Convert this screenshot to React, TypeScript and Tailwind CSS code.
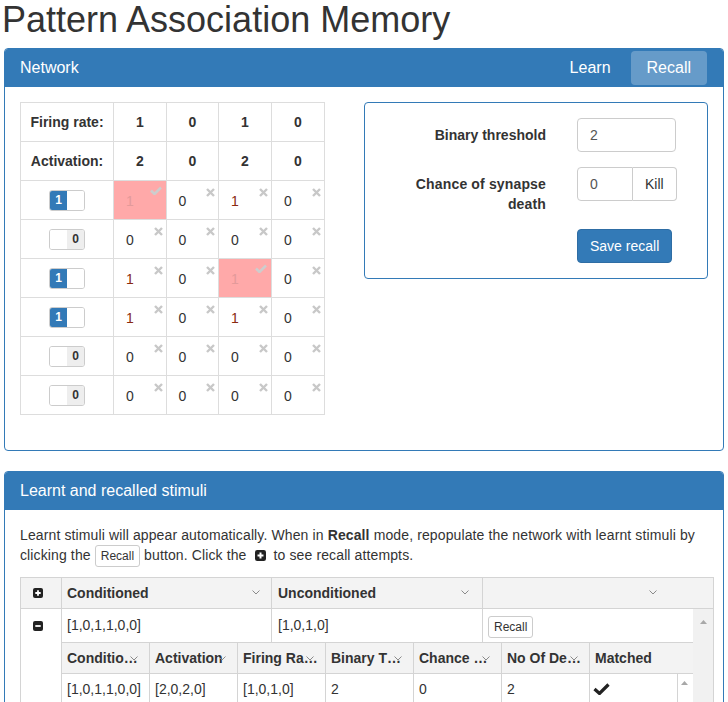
import React from 'react';

type MatrixRow = { on: boolean; cells: number[]; hit: number };

const matrix: MatrixRow[] = [
  { on: true, cells: [1, 0, 1, 0], hit: 0 },
  { on: false, cells: [0, 0, 0, 0], hit: -1 },
  { on: true, cells: [1, 0, 1, 0], hit: 2 },
  { on: true, cells: [1, 0, 1, 0], hit: -1 },
  { on: false, cells: [0, 0, 0, 0], hit: -1 },
  { on: false, cells: [0, 0, 0, 0], hit: -1 },
];

const colWidths = ['w-[53px]', 'w-[52px]', 'w-[53px]', 'w-[53px]'];

const XMark = () => (
  <svg width="9" height="9" viewBox="0 0 9 9" className="absolute top-[7px] right-[3px]">
    <path d="M1 1L8 8M8 1L1 8" stroke="#c8c8c8" strokeWidth="2.4" />
  </svg>
);

const OkMark = ({ color = '#cdcdcd' }: { color?: string }) => (
  <svg width="12" height="9" viewBox="0 0 12 9" className="absolute top-[5px] right-[4px]">
    <path d="M1 4.5L4.5 8L11 1.5" fill="none" stroke={color} strokeWidth="2.6" />
  </svg>
);

const PlusSquare = ({ size = 10 }: { size?: number }) => (
  <svg width={size} height={size} viewBox="0 0 10 10">
    <rect x="0" y="0" width="10" height="10" rx="2" fill="#222" />
    <path d="M5 2.3V7.7M2.3 5H7.7" stroke="#fff" strokeWidth="1.8" />
  </svg>
);

const MinusSquare = () => (
  <svg width="10" height="10" viewBox="0 0 10 10">
    <rect x="0" y="0" width="10" height="10" rx="2" fill="#222" />
    <path d="M2.3 5H7.7" stroke="#fff" strokeWidth="1.8" />
  </svg>
);

const Chevron = ({ className }: { className: string }) => (
  <svg width="8" height="5" viewBox="0 0 8 5" className={`absolute ${className}`}>
    <polyline points="0.5,0.5 4,4 7.5,0.5" fill="none" stroke="#8a8a8a" strokeWidth="1" />
  </svg>
);

const UpArrow = ({ className }: { className: string }) => (
  <svg width="7" height="4" viewBox="0 0 7 4" className={`absolute ${className}`}>
    <polygon points="0,4 3.5,0 7,4" fill="#a8a8a8" />
  </svg>
);

const Switch = ({ on }: { on: boolean }) => (
  <div className="inline-flex h-[21px] w-[36px] rounded-[3px] border border-[#ccc] overflow-hidden text-[12px] font-bold leading-none align-middle">
    <span className={`w-1/2 flex items-center justify-center ${on ? 'bg-[#337ab7] text-white' : 'bg-white'}`}>
      {on ? '1' : ''}
    </span>
    <span className={`w-1/2 flex items-center justify-center ${on ? 'bg-white' : 'bg-[#eee] text-[#333]'}`}>
      {on ? '' : '0'}
    </span>
  </div>
);

const NetworkTable = () => (
  <table className="border-collapse mb-[20px] shrink-0">
    <tbody>
      <tr className="h-[39px]">
        <td className="w-[93px] border border-[#ddd] text-center font-bold">Firing rate:</td>
        {[1, 0, 1, 0].map((v, i) => (
          <td key={i} className={`${colWidths[i]} border border-[#ddd] text-center font-bold`}>{v}</td>
        ))}
      </tr>
      <tr className="h-[39px]">
        <td className="border border-[#ddd] text-center font-bold">Activation:</td>
        {[2, 0, 2, 0].map((v, i) => (
          <td key={i} className="border border-[#ddd] text-center font-bold">{v}</td>
        ))}
      </tr>
      {matrix.map((row, r) => (
        <tr key={r} className="h-[39px]">
          <td className="border border-[#ddd] text-center">
            <Switch on={row.on} />
          </td>
          {row.cells.map((v, c) => {
            const hit = row.hit === c;
            return (
              <td
                key={c}
                className={`relative border border-[#ddd] text-center pl-0 pr-[20px] pt-[2px] ${
                  hit ? 'bg-[#ffa9a9] text-[#e39a9a]' : v === 1 ? 'text-[#8a2a10]' : 'text-[#333]'
                }`}
              >
                {v}
                {hit ? <OkMark /> : <XMark />}
              </td>
            );
          })}
        </tr>
      ))}
    </tbody>
  </table>
);

const RecallForm = () => (
  <div className="ml-[39px] w-[344px] border border-[#337ab7] rounded-[4px] pt-[15px] pb-[15px] pl-[31px]">
    <div className="flex mb-[15px]">
      <label className="w-[150px] text-right font-bold pt-[7px] leading-[20px]">Binary threshold</label>
      <input
        defaultValue="2"
        className="ml-[31px] w-[99px] h-[34px] border border-[#ccc] rounded-[4px] px-[12px] text-[#555] outline-none"
      />
    </div>
    <div className="flex mb-[15px]">
      <label className="w-[150px] text-right font-bold pt-[7px] leading-[20px] tracking-[0.15px]">
        Chance of synapse death
      </label>
      <div className="ml-[31px] flex h-[34px]">
        <input
          defaultValue="0"
          className="w-[56px] h-[34px] border border-[#ccc] rounded-l-[4px] px-[12px] text-[#555] outline-none"
        />
        <button className="h-[34px] px-[12px] border border-l-0 border-[#ccc] rounded-r-[4px] bg-white text-[#333]">
          Kill
        </button>
      </div>
    </div>
    <button className="ml-[181px] h-[34px] px-[12px] bg-[#337ab7] border border-[#2e6da4] rounded-[4px] text-white">
      Save recall
    </button>
  </div>
);

const NetworkPanel = () => (
  <div className="border border-[#337ab7] rounded-[4px] mb-[20px]">
    <div className="bg-[#337ab7] rounded-t-[3px] h-[38px] flex items-center justify-between pl-[15px] pr-[16px] text-white text-[16px]">
      <span>Network</span>
      <div className="flex gap-[4px]">
        <span className="h-[34px] px-[16px] flex items-center rounded-[4px]">Learn</span>
        <span className="h-[34px] px-[16px] flex items-center rounded-[4px] bg-white/25">Recall</span>
      </div>
    </div>
    <div className="p-[15px] flex items-start">
      <NetworkTable />
      <RecallForm />
    </div>
  </div>
);

const SmallButton = ({ children }: { children: React.ReactNode }) => (
  <span className="inline-block border border-[#ccc] rounded-[3px] px-[5px] py-[1px] text-[12px] leading-[18px] bg-white text-[#333] tracking-normal">
    {children}
  </span>
);

const subColumns = [
  { label: 'Conditioned', value: '[1,0,1,1,0,0]' },
  { label: 'Activation', value: '[2,0,2,0]' },
  { label: 'Firing Rates', value: '[1,0,1,0]' },
  { label: 'Binary Threshold', value: '2' },
  { label: 'Chance Of Death', value: '0' },
  { label: 'No Of Deaths', value: '2' },
];

const StimuliGrid = () => (
  <div className="w-[694px] border border-[#d4d4d4]">
    <div className="flex h-[31px] bg-[#f3f3f3] border-b border-[#d4d4d4] font-bold">
      <div className="w-[41px] border-r border-[#d4d4d4] flex items-center pl-[12px]">
        <PlusSquare />
      </div>
      <div className="relative w-[210px] border-r border-[#d4d4d4] flex items-center pl-[5px]">
        Conditioned
        <Chevron className="right-[11px] top-[12px]" />
      </div>
      <div className="relative w-[211px] border-r border-[#d4d4d4] flex items-center pl-[6px]">
        Unconditioned
        <Chevron className="right-[13px] top-[12px]" />
      </div>
      <div className="relative w-[187px]">
        <Chevron className="right-[13px] top-[12px]" />
      </div>
    </div>
    <div className="flex">
      <div className="w-[672px]">
        <div className="flex h-[33px]">
          <div className="w-[41px] border-r border-[#d4d4d4] flex items-center pl-[12px]">
            <MinusSquare />
          </div>
          <div className="w-[210px] border-r border-[#d4d4d4] flex items-center pl-[5px]">[1,0,1,1,0,0]</div>
          <div className="w-[211px] border-r border-[#d4d4d4] flex items-center pl-[6px]">[1,0,1,0]</div>
          <div className="flex-1 flex items-center pl-[5px] pt-[2px]">
            <SmallButton>Recall</SmallButton>
          </div>
        </div>
        <div className="flex">
          <div className="w-[41px] border-r border-[#d4d4d4]" />
          <div className="flex-1 border-t border-[#d4d4d4]">
            <div className="flex h-[31px] bg-[#f3f3f3] border-b border-[#d4d4d4] font-bold">
              {subColumns.map((col) => (
                <div key={col.label} className="relative w-[88px] border-r border-[#d4d4d4] flex items-center pl-[5px] pr-[7px]">
                  <span className="truncate">{col.label}</span>
                  <Chevron className="right-[11px] top-[13px]" />
                </div>
              ))}
              <div className="flex-1 flex items-center pl-[5px]">Matched</div>
            </div>
            <div className="relative flex h-[30px]">
              {subColumns.map((col) => (
                <div key={col.label} className="w-[88px] border-r border-[#d4d4d4] flex items-center pl-[5px]">
                  {col.value}
                </div>
              ))}
              <div className="relative w-[88px] border-r border-[#d4d4d4] flex items-center pl-[3px]">
                <svg width="17" height="12" viewBox="0 0 17 12">
                  <path d="M1.5 6L6.5 10.5L15.5 1.5" fill="none" stroke="#222" strokeWidth="3.2" />
                </svg>
              </div>
              <UpArrow className="left-[619px] top-[7px]" />
            </div>
          </div>
        </div>
      </div>
      <div className="relative w-[20px] bg-[#f1f1f1] h-[94px]">
        <UpArrow className="left-[7px] top-[11px]" />
      </div>
    </div>
  </div>
);

const StimuliPanel = () => (
  <div className="border border-[#337ab7] rounded-[4px]">
    <div className="bg-[#337ab7] rounded-t-[3px] h-[38px] flex items-center pl-[15px] text-white text-[16px]">
      Learnt and recalled stimuli
    </div>
    <div className="p-[15px]">
      <p className="leading-[20px] mb-[10px] tracking-[0.12px]">
        Learnt stimuli will appear automatically. When in <b>Recall</b> mode, repopulate the network with learnt
        stimuli by clicking the <SmallButton>Recall</SmallButton> button. Click the{' '}
        <span className="inline-block mx-[4px] align-[-1px]">
          <PlusSquare size={11} />
        </span>{' '}
        to see recall attempts.
      </p>
      <StimuliGrid />
    </div>
  </div>
);

export default function App() {
  return (
    <div className="min-h-screen bg-white px-[4px] text-[14px] text-[#333] font-['Liberation_Sans',Arial,sans-serif]">
      <h1 className="text-[36px] leading-[40px] font-normal -ml-[2px] mb-[8px]">Pattern Association Memory</h1>
      <NetworkPanel />
      <StimuliPanel />
    </div>
  );
}
